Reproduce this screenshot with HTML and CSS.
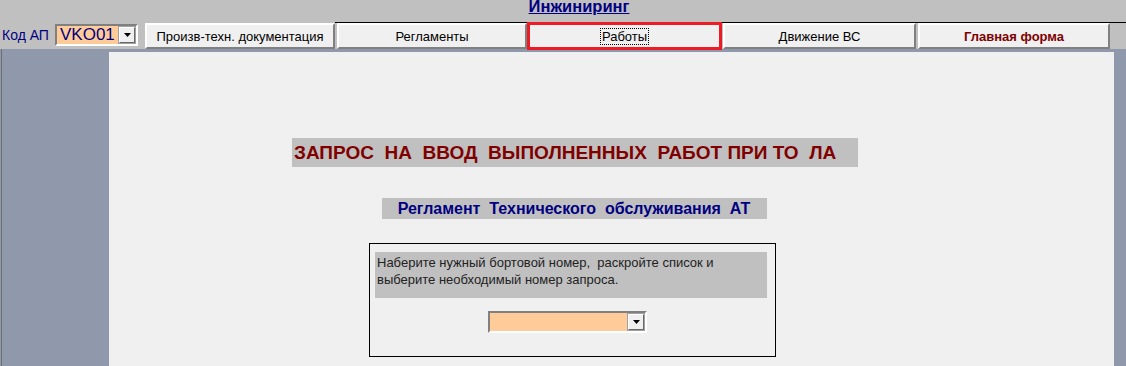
FILE: index.html
```
<!DOCTYPE html>
<html lang="ru">
<head>
  <meta charset="UTF-8" />
  <title>Инжиниринг</title>
  <link rel="stylesheet" href="styles.css">
</head>
<body>

  <div class="top">
    <div class="title"><a href="#">Инжиниринг</a></div>

    <div class="toolbar">
      <span class="ap-label">Код АП</span>
      <div class="combo combo-ap">
        <span class="combo-value">VKO01</span>
        <span class="combo-btn">
          <svg width="7" height="4" viewBox="0 0 7 4"><path d="M0 0H7L3.5 4Z" fill="#000"/></svg>
        </span>
      </div>
      <button class="tb-btn tb-first">Произв-техн. документация</button>
      <div class="tb-group">
        <button class="tb-btn btn-regl">Регламенты</button>
        <button class="tb-btn btn-active"><span class="focus">Работы</span></button>
        <button class="tb-btn btn-move">Движение ВС</button>
        <button class="tb-btn btn-main">Главная форма</button>
      </div>
    </div>
  </div>

  <div class="main">
    <div class="side"></div>

    <div class="content">
      <div class="head-box">ЗАПРОС  НА  ВВОД  ВЫПОЛНЕННЫХ  РАБОТ ПРИ ТО  ЛА</div>
      <div class="sub-box">Регламент  Технического  обслуживания  АТ</div>

      <div class="panel">
        <div class="hint">Наберите нужный бортовой номер,  раскройте список и
выберите необходимый номер запроса.</div>
        <div class="combo combo-req">
          <span class="combo-value"></span>
          <span class="combo-btn">
            <svg width="7" height="4" viewBox="0 0 7 4"><path d="M0 0H7L3.5 4Z" fill="#000"/></svg>
          </span>
        </div>
      </div>
    </div>

    <div class="side-r"></div>
  </div>

</body>
</html>
```

FILE: styles.css
```
body {
  margin: 0;
  height: 366px;
  overflow: hidden;
  font-family: "Liberation Sans", Arial, sans-serif;
  background-color: #c0c0c0;
}

.top {
  background-color: #c0c0c0;
}

.title {
  height: 22px;
  line-height: 13px;
  text-align: center;
  padding-left: 32px;
}

.title a {
  font-size: 16.5px;
  font-weight: bold;
  color: #000080;
  text-decoration: underline;
}

.toolbar {
  display: flex;
  align-items: flex-start;
  height: 27px;
}

.ap-label {
  width: 53px;
  margin-left: 2px;
  line-height: 27px;
  font-size: 14px;
  color: #000080;
}

.combo {
  display: flex;
  box-sizing: border-box;
  background-color: #ffcc99;
  border: 2px solid;
  border-color: #808080 #fff #fff #808080;
}

.combo-value {
  flex: 1;
  padding-left: 3px;
  font-size: 17px;
  line-height: 18px;
  color: #000080;
}

.combo-btn {
  display: flex;
  align-items: center;
  justify-content: center;
  box-sizing: border-box;
  width: 16px;
  background-color: #f0f0f0;
  border: 1px solid;
  border-color: #fff #696969 #696969 #fff;
  box-shadow: 0 0 0 1px #a0a0a0;
  margin: 1px;
}

.combo-ap {
  width: 83px;
  height: 22px;
  margin-top: 2px;
}

.tb-btn {
  box-sizing: border-box;
  height: 26px;
  padding: 0;
  font-family: "Liberation Sans", Arial, sans-serif;
  font-size: 13px;
  color: #000;
  background-color: #f0f0f0;
  border: 2px solid;
  border-color: #fff #808080 #808080 #fff;
}

.tb-first {
  width: 190px;
  margin-left: 7px;
  margin-top: 1px;
}

.tb-group {
  flex: 1;
  display: flex;
  border-top: 1px solid #000;
  padding-left: 2px;
}

.btn-regl { width: 190px; }

.btn-active {
  width: 195px;
  height: 28px;
  margin-top: -1px;
  border: 3px solid #ed1c24;
}

.focus {
  outline: 1px dotted #000;
  padding: 0 1px;
}

.btn-move { width: 193px; margin-left: 1px; }

.btn-main {
  width: 192px;
  margin-left: 2px;
  font-weight: bold;
  color: #800000;
}

.main {
  display: flex;
  height: 317px;
  padding-top: 3px;
  background-color: #9098ac;
}

.side {
  width: 109px;
  box-shadow: inset 1px 0 #9098ac, inset 2px 0 #707070;
  margin-top: -3px;
}

.content {
  width: 1005px;
  box-sizing: border-box;
  padding: 86px 75px 0 0;
  background-color: #f0f0f0;
  display: flex;
  flex-direction: column;
  align-items: center;
}

.side-r {
  flex: 1;
}

.head-box {
  box-sizing: border-box;
  width: 566px;
  height: 29px;
  margin-left: 2px;
  line-height: 29px;
  padding-left: 2px;
  background-color: #c0c0c0;
  font-size: 19px;
  font-weight: bold;
  color: #800000;
  white-space: pre;
}

.sub-box {
  width: 385px;
  height: 21px;
  line-height: 21px;
  margin-top: 31px;
  background-color: #c0c0c0;
  text-align: center;
  font-size: 16px;
  font-weight: bold;
  color: #000080;
  white-space: pre;
}

.panel {
  box-sizing: border-box;
  width: 407px;
  height: 114px;
  margin: 24px 3px 0 0;
  padding: 8px 8px 0 5px;
  border: 1px solid #000;
}

.hint {
  height: 46px;
  box-sizing: border-box;
  padding: 2px 0 0 2px;
  background-color: #c0c0c0;
  font-size: 13px;
  line-height: 17px;
  color: #222;
  white-space: pre-wrap;
}

.combo-req {
  width: 159px;
  height: 22px;
  margin: 13px 0 0 113px;
}
```
